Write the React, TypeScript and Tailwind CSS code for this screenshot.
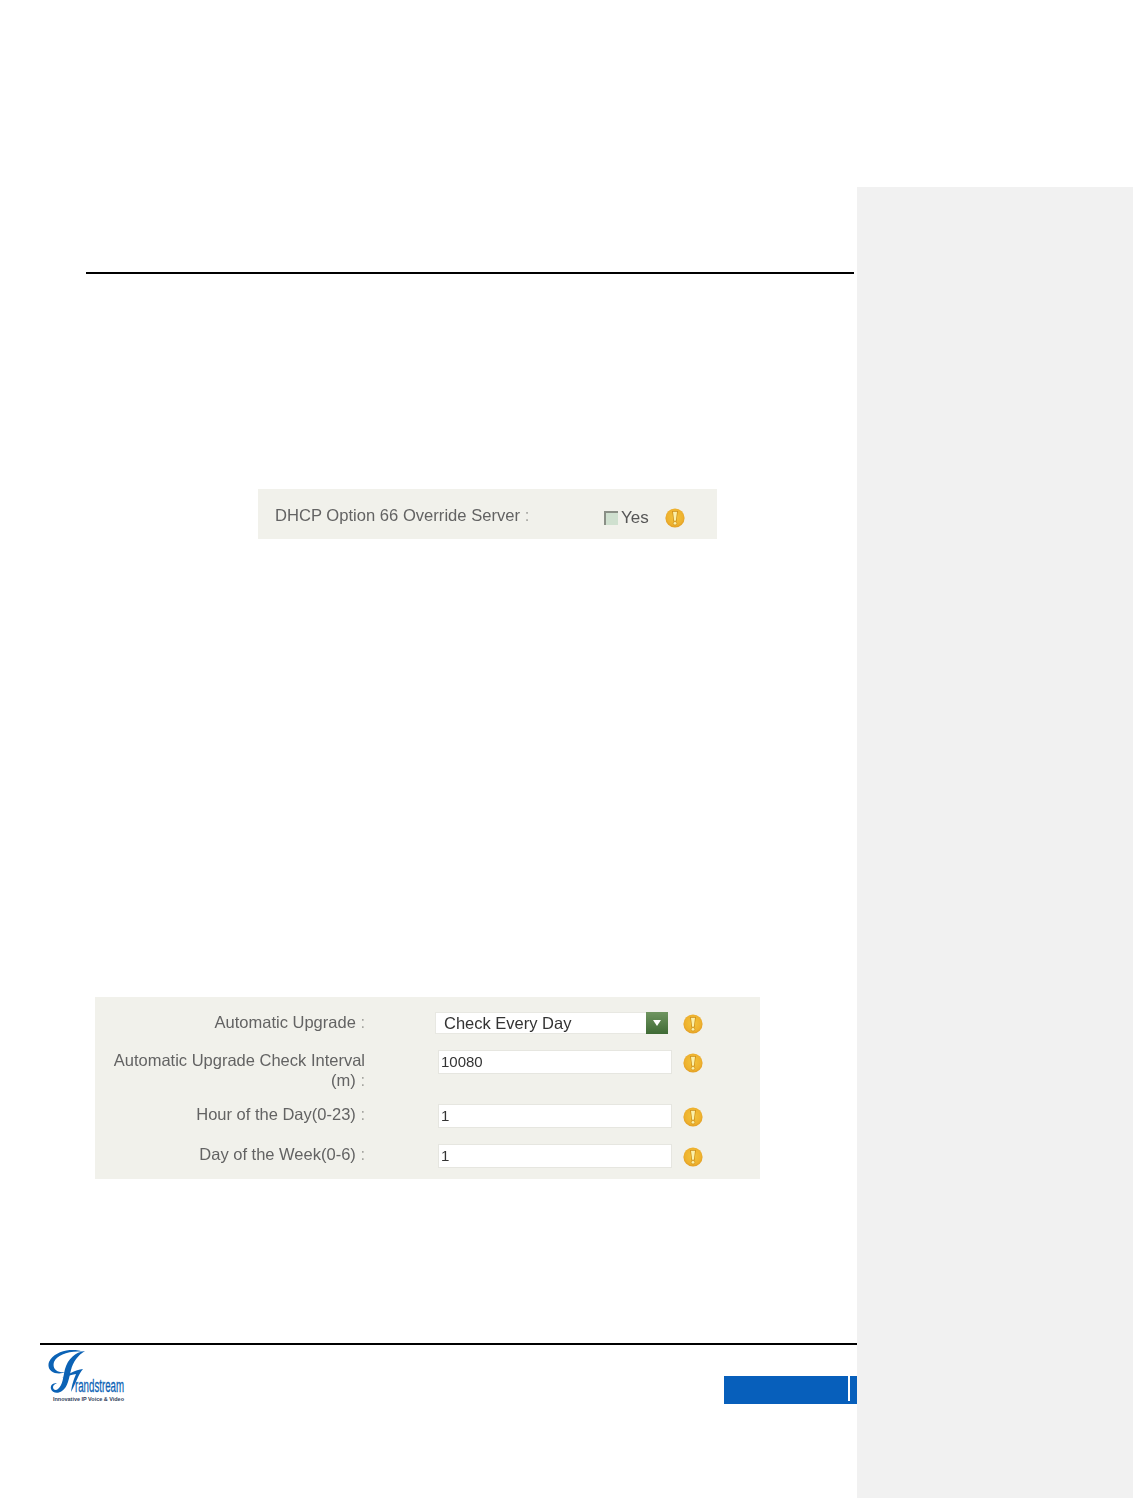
import { ReactElement } from 'react';

function WarnIcon({ className }: { className: string }): ReactElement {
  return (
    <svg viewBox="0 0 20 20" className={`w-5 h-5 shrink-0 ${className}`}>
      <defs>
        <radialGradient id="warnFill" cx="50%" cy="45%" r="60%">
          <stop offset="0%" stopColor="#f3c53c" />
          <stop offset="70%" stopColor="#eeb12e" />
          <stop offset="100%" stopColor="#dc951f" />
        </radialGradient>
      </defs>
      <circle cx="10" cy="10" r="9.6" fill="url(#warnFill)" />
      <path d="M7.200 3h5.600l-1.300 10.500h-3z" fill="#c98a14" />
      <path d="M8 3.800h4l-1.100 8.900H9.100z" fill="#fbf0a8" />
      <circle cx="10" cy="15.300" r="1.800" fill="#fbf0a8" stroke="#c98a14" strokeWidth=".6" />
    </svg>
  );
}

function Logo(): ReactElement {
  return (
    <svg viewBox="0 0 78 54" className="w-[78px] h-[54px] ml-12 mt-[5px] shrink-0">
      {/* outer curl of the G */}
      <path d="M36 2C24-3 6 1 1 12c-3 9 7 14 17 10-9 1-14-3-12-10C9 5 22 0 36 2z" fill="#0b62b5" />
      {/* long stem with the lower hook */}
      <path
        d="M37 1c-10 1-17 8-20 18-2 8-2 16-7 20-2 2-5 1-5-2 0-2 2-3 4-4-4 0-7 2-6 6 1 4 7 5 11 2 6-4 7-13 9-21C25 12 30 5 37 1z"
        fill="#0b62b5"
      />
      {/* bar and right stroke */}
      <path d="M14 28c6-4 13-8 21-9-5 6-7 14-12 23 1-8 3-13 5-18-5 1-10 2-14 4z" fill="#0b62b5" />
      <text x="27" y="42" fontSize="18" textLength="49" lengthAdjust="spacingAndGlyphs" stroke="#0b62b5" strokeWidth=".3" fill="#0b62b5" fontFamily="Liberation Sans, sans-serif">
        randstream
      </text>
      <text x="5" y="51" fontSize="5" fontWeight="700" textLength="71" lengthAdjust="spacingAndGlyphs" fill="#33415a" fontFamily="Liberation Sans, sans-serif">
        Innovative IP Voice &amp; Video
      </text>
    </svg>
  );
}

function Label({ text }: { text: string }): ReactElement {
  return (
    <div className="w-[270px] shrink-0 text-right leading-5 text-[16.500px] text-[#636363]">
      {text} <span className="text-[#a5a5a0]">:</span>
    </div>
  );
}

function InputRow({ label, value }: { label: string; value: string }): ReactElement {
  return (
    <div className="flex items-start">
      <Label text={label} />
      <input
        readOnly
        value={value}
        className="ml-[73px] w-[234px] h-6 bg-white border border-[#e6e6e0] px-[2px] pb-[2px] text-[15px] text-[#333] outline-none"
      />
      <WarnIcon className="ml-[11px] mt-[3px]" />
    </div>
  );
}

export default function App(): ReactElement {
  return (
    <div className="flex w-[1133px] h-[1498px] bg-white overflow-hidden font-['Liberation_Sans',Arial,sans-serif]">
      <div className="w-[857px] shrink-0 flex flex-col">
        <div className="ml-[86px] mr-[3px] mt-[272px] h-[2px] bg-black" />

        <div className="ml-[258px] mt-[215px] w-[459px] h-[50px] pt-2 bg-[#f1f1eb] flex items-center text-[#636363] blur-[0.4px]">
          <span className="ml-[17px] w-[329px] -mt-[3px] shrink-0 text-[16.600px]">
            DHCP Option 66 Override Server <span className="text-[#a5a5a0]">:</span>
          </span>
          <span className="w-[14px] h-[14px] shrink-0 bg-[#cfe0cf] border-t-2 border-l-2 border-[#8a8f86]" />
          <span className="ml-[3px] w-[28px] shrink-0 text-[17px] text-[#555]">Yes</span>
          <WarnIcon className="ml-4" />
        </div>

        <div className="ml-[95px] mt-[458px] w-[665px] bg-[#f1f1eb] pt-[15px] pb-[11px] flex flex-col blur-[0.4px]">
          <div className="flex items-start">
            <Label text="Automatic Upgrade" />
            <div className="ml-[70px] w-[233px] h-[22px] bg-white border border-[#e8e8e2] flex items-center justify-between">
              <span className="ml-2 text-[16.500px] text-[#333]">Check Every Day</span>
              <span className="w-[22px] h-[22px] -mr-px bg-gradient-to-b from-[#6f9560] to-[#3f6b35] flex items-center justify-center">
                <span className="w-0 h-0 border-x-[4px] border-x-transparent border-t-[6px] border-t-white" />
              </span>
            </div>
            <WarnIcon className="ml-[15px] mt-[2px]" />
          </div>
          <div className="mt-4">
            <InputRow label="Automatic Upgrade Check Interval (m)" value="10080" />
          </div>
          <div className="mt-[14px]">
            <InputRow label="Hour of the Day(0-23)" value="1" />
          </div>
          <div className="mt-4">
            <InputRow label="Day of the Week(0-6)" value="1" />
          </div>
        </div>

        <div className="ml-10 mt-[164px] h-[2px] bg-black" />
        <div className="flex items-start">
          <Logo />
          <div className="ml-auto mt-[31px] w-[133px] h-7 bg-[#075fbb] flex items-start">
            <div className="ml-[124px] w-[2px] h-[25px] bg-white" />
          </div>
        </div>
      </div>
      <div className="flex-1 mt-[187px] bg-[#f1f1f1]" />
    </div>
  );
}
